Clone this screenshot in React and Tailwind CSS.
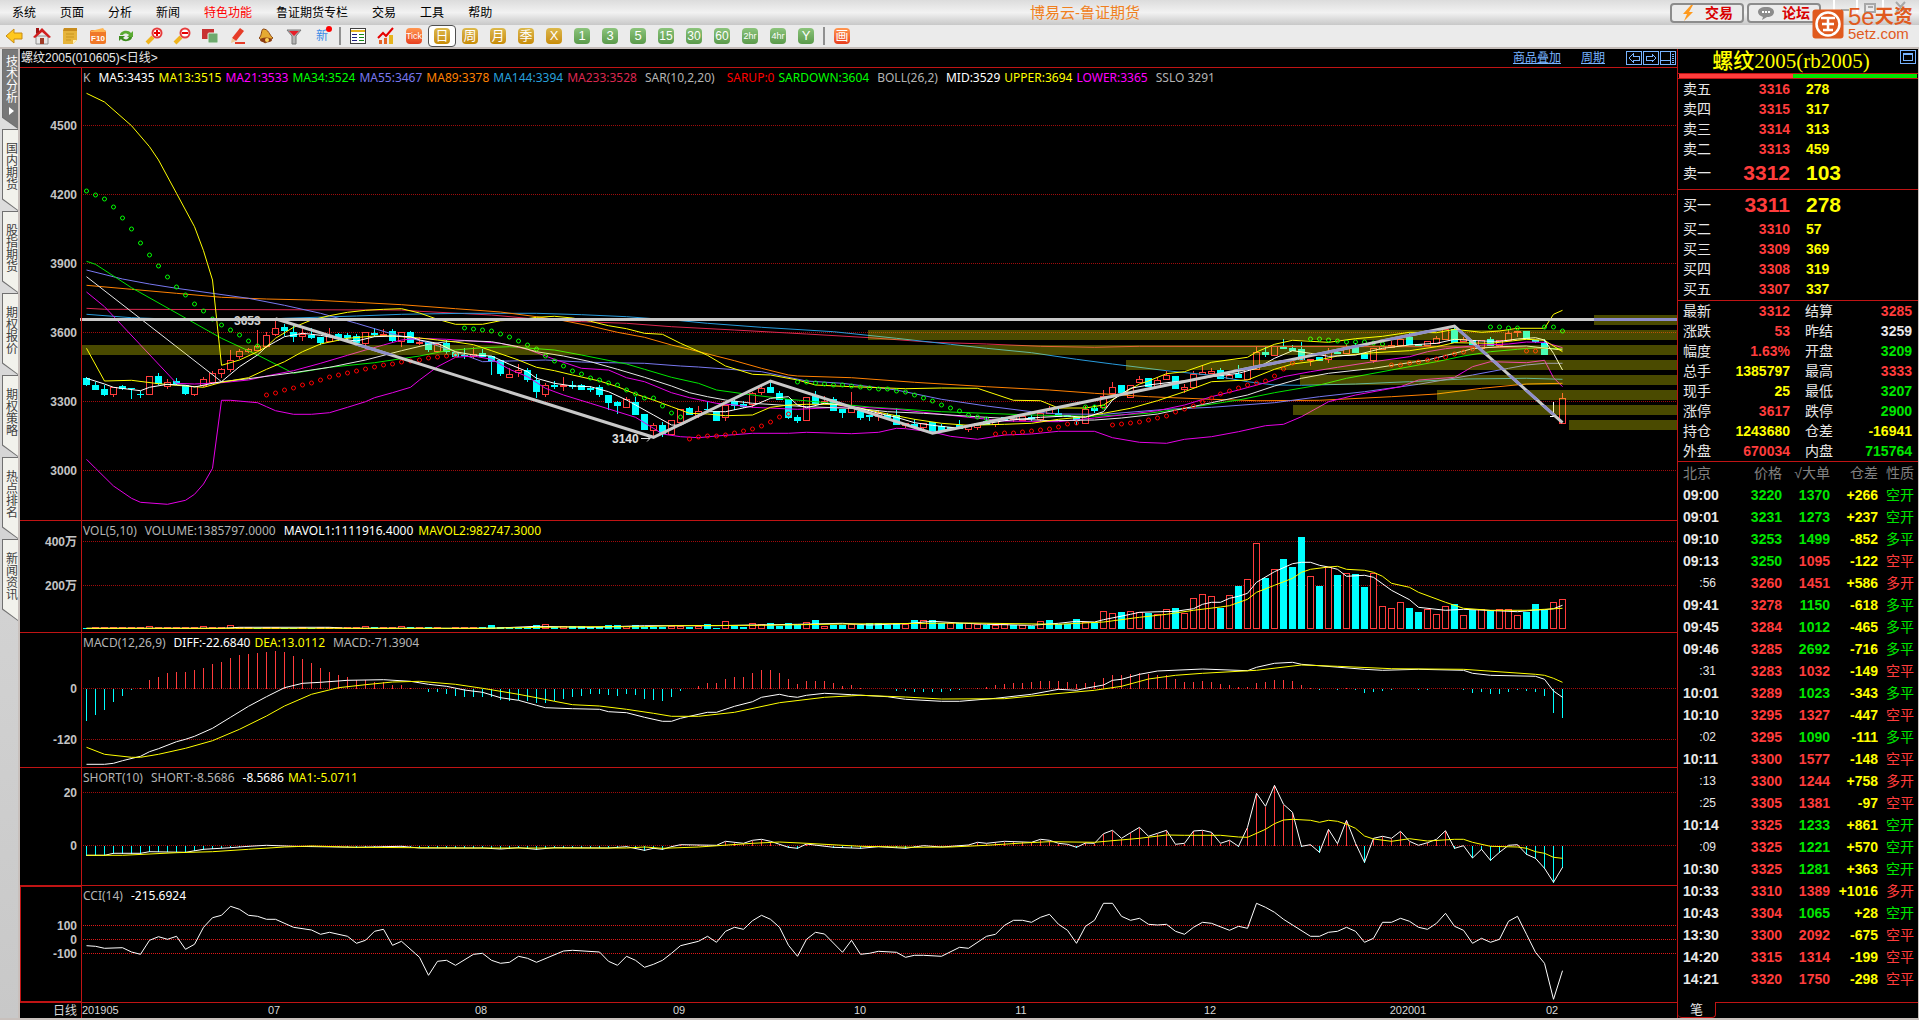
import clsx from "clsx";

const MENU = ["系统", "页面", "分析", "新闻", "特色功能", "鲁证期货专栏", "交易", "工具", "帮助"];

const SIDE_TABS = ["技术分析", "国内期货", "股指期货", "期权报价", "期权策略", "热点排名", "新闻资讯"];

const PERIODS = [
  { label: "日", color: "gold", active: true },
  { label: "周", color: "gold" },
  { label: "月", color: "gold" },
  { label: "季", color: "gold" },
  { label: "X", color: "gold" },
  { label: "1", color: "green" },
  { label: "3", color: "green" },
  { label: "5", color: "green" },
  { label: "15", color: "green" },
  { label: "30", color: "green" },
  { label: "60", color: "green" },
  { label: "2hr", color: "green" },
  { label: "4hr", color: "green" },
  { label: "Y", color: "green" },
];

const ASKS = [
  ["卖五", 3316, 278],
  ["卖四", 3315, 317],
  ["卖三", 3314, 313],
  ["卖二", 3313, 459],
];

const BIDS = [
  ["买二", 3310, 57],
  ["买三", 3309, 369],
  ["买四", 3308, 319],
  ["买五", 3307, 337],
];

const RED = "text-[#ff3c3c]";
const GREEN = "text-[#00e600]";
const YELLOW = "text-[#ffff00]";
const WHITE = "text-[#e8e8e8]";

const STATS = [
  ["最新", "3312", RED, "结算", "3285", RED],
  ["涨跌", "53", RED, "昨结", "3259", WHITE],
  ["幅度", "1.63%", RED, "开盘", "3209", GREEN],
  ["总手", "1385797", YELLOW, "最高", "3333", RED],
  ["现手", "25", YELLOW, "最低", "3207", GREEN],
  ["涨停", "3617", RED, "跌停", "2900", GREEN],
  ["持仓", "1243680", YELLOW, "仓差", "-16941", YELLOW],
  ["外盘", "670034", RED, "内盘", "715764", GREEN],
];

// time, price, price side, size, position change, kind, trade side
const TICKS = [
  ["09:00", 3220, GREEN, 1370, "+266", "空开", GREEN],
  ["09:01", 3231, GREEN, 1273, "+237", "空开", GREEN],
  ["09:10", 3253, GREEN, 1499, "-852", "多平", GREEN],
  ["09:13", 3250, GREEN, 1095, "-122", "空平", RED],
  [":56", 3260, RED, 1451, "+586", "多开", RED],
  ["09:41", 3278, RED, 1150, "-618", "多平", GREEN],
  ["09:45", 3284, RED, 1012, "-465", "多平", GREEN],
  ["09:46", 3285, RED, 2692, "-716", "多平", GREEN],
  [":31", 3283, RED, 1032, "-149", "空平", RED],
  ["10:01", 3289, RED, 1023, "-343", "多平", GREEN],
  ["10:10", 3295, RED, 1327, "-447", "空平", RED],
  [":02", 3295, RED, 1090, "-111", "多平", GREEN],
  ["10:11", 3300, RED, 1577, "-148", "空平", RED],
  [":13", 3300, RED, 1244, "+758", "多开", RED],
  [":25", 3305, RED, 1381, "-97", "空平", RED],
  ["10:14", 3325, RED, 1233, "+861", "空开", GREEN],
  [":09", 3325, RED, 1221, "+570", "空开", GREEN],
  ["10:30", 3325, RED, 1281, "+363", "空开", GREEN],
  ["10:33", 3310, RED, 1389, "+1016", "多开", RED],
  ["10:43", 3304, RED, 1065, "+28", "空开", GREEN],
  ["13:30", 3300, RED, 2092, "-675", "空平", RED],
  ["14:20", 3315, RED, 1314, "-199", "空平", RED],
  ["14:21", 3320, RED, 1750, "-298", "空平", RED],
];

/* ---------- chart data: "bar,level" pairs, three levels to a pixel ---------- */

const MAIN_LINES = [
  ["#dc2850", "0,685 2,688 35,690 37,694 45,705 49,715 55,725 60,730 65,740 72,750 80,762 87,773 94,787 100,792 106,799 112,802 117,799 150,800 155,802 164,806"],
  ["#289bdc", "0,703 5,713 10,718 20,718 22,715 30,708 35,703 42,700 50,700 55,704 60,710 63,716 66,722 69,730 75,742 83,755 90,775 96,793 100,805 105,818 110,838 114,852 120,872 125,886 129,905 132,915 135,916 141,912 147,905 153,897 160,895 164,898"],
  ["#ff8000", "0,616 5,628 10,640 15,652 20,657 25,660 30,667 35,674 41,686 46,696 50,710 53,722 56,738 59,757 62,772 65,795 67,808 72,842 75,865 78,885 79,888 85,893 92,907 100,920 107,930 112,940 118,950 125,958 130,962 137,961 145,950 150,942 155,925 160,912 164,910"],
  ["#7878f0", "0,570 4,597 7,612 10,625 18,655 22,676 26,700 30,730 34,762 38,788 42,825 44,845 47,843 51,840 55,846 58,848 62,850 66,858 68,861 75,875 80,903 84,910 90,930 95,958 100,978 105,995 108,1002 113,1003 120,988 125,982 132,968 137,950 142,935 148,913 154,885 158,865 160,855 162,850 164,850"],
  ["#00e600", "0,544 1,553 5,623 15,775 19,825 23,880 27,862 32,848 37,828 40,812 44,803 47,800 52,810 55,825 60,852 62,868 65,892 68,910 70,930 74,945 78,958 81,965 87,981 95,995 105,1005 112,1009 118,1000 122,985 128,960 132,938 137,915 140,895 145,870 150,845 153,828 156,815 159,808 161,803 164,807"],
  ["#e600e6", "0,636 2,680 10,910 12,912 15,908 18,900 20,888 23,872 26,850 29,826 31,810 33,795 35,780 37,775 40,778 43,783 46,790 49,808 52,838 55,865 58,870 60,893 62,905 65,938 67,953 70,970 72,975 74,982 79,988 85,980 90,988 95,1003 98,1012 102,1023 108,1025 112,1014 115,1005 119,992 122,975 125,950 128,930 131,908 133,890 136,875 139,862 143,845 147,830 149,815 151,806 155,795 158,792 160,786 162,787 164,803"],
  ["#e6e6e6", "0,590 15,905 18,896 23,878 27,862 31,840 35,812 38,793 40,785 42,782 45,785 48,800 50,815 53,828 56,845 59,868 62,892 65,918 67,938 69,950 71,960 74,970 80,980 86,986 89,995 93,1000 100,1012 107,1022 112,1020 115,1014 119,1002 125,968 129,945 132,918 135,895 138,880 143,865 146,852 149,840 152,820 154,806 157,800 160,798 164,810"],
  ["#ffff00", "0,805 2,903 5,901 8,911 10,916 13,922 15,907 18,893 20,868 22,845 24,815 26,792 29,775 32,768 34,768 37,774 39,780 41,786 43,794 45,812 48,840 50,862 52,872 54,885 57,903 59,920 61,942 63,960 65,980 67,1000 69,1002 71,1007 74,1005 76,982 78,975 80,973 83,973 86,985 89,1002 92,1018 95,1030 98,1036 102,1033 105,1030 108,1018 111,1010 113,1000 116,985 119,962 122,935 125,905 129,900 132,868 134,852 136,845 139,828 143,818 147,812 150,800 152,788 156,790 160,778 162,781 164,815"],
  ["#ffff00", "0,40 2,66 5,137 7,200 8,240 10,340 12,440 13,512 14,600 15,856 17,840 19,815 20,800 21,775 23,742 25,720 27,707 29,697 31,691 33,688 35,686 37,699 39,718 41,733 44,733 46,722 48,720 50,712 52,709 54,714 56,724 58,737 60,746 62,760 64,763 66,790 69,826 71,858 74,883 76,885 79,900 81,915 84,919 91,926 95,924 99,925 103,961 106,962 108,984 111,984 113,975 115,942 117,912 118,903 120,881 122,875 125,847 129,832 130,816 132,793 134,781 138,787 141,776 144,769 147,757 150,758 152,748 155,757 157,753 159,745 162,745 163,703 164,691"],
  ["#e600e6", "0,1138 1,1165 3,1218 5,1255 6,1267 9,1273 11,1261 12,1243 13,1212 14,1165 15,961 16,961 19,968 20,980 21,992 23,1003 25,1003 27,998 29,982 31,965 32,953 34,938 36,922 37,900 39,860 41,832 43,828 45,838 47,868 49,890 51,925 53,945 56,970 59,995 61,1012 63,1045 64,1062 66,1070 68,1073 70,1068 74,1060 78,1060 80,1057 85,1061 88,1057 90,1045 91,1046 94,1056 96,1069 99,1078 102,1065 105,1062 108,1054 112,1054 114,1073 117,1087 120,1090 122,1078 125,1070 128,1055 131,1037 133,1033 135,1010 138,965 141,945 144,930 146,920 148,900 152,892 154,860 156,845 160,848 162,841 163,893 164,920"],
  ["#ffffff", "0,895 2,912 3,922 6,932 7,922 9,913 11,916 12,921 14,910 15,905 17,860 19,825 20,800 21,785 22,770 24,760 26,766 28,776 30,783 32,770 34,768 36,770 37,780 39,790 41,815 43,825 45,828 47,853 49,875 50,895 52,910 54,918 56,920 58,935 60,960 61,975 63,1005 65,1035 66,1036 67,1022 69,995 71,995 74,978 76,955 78,950 79,975 80,983 82,970 84,975 86,985 88,1000 90,1012 92,1028 94,1036 97,1045 99,1035 102,1022 106,1012 109,1008 111,1012 113,995 114,960 116,925 118,915 121,905 123,900 125,890 128,880 130,865 132,835 134,812 136,820 138,829 141,825 144,805 147,795 150,790 152,778 155,783 157,784 159,777 161,773 162,780 163,820 164,870"],
];

// open/close top, bottom, then high, low. "d" closes down, "u" closes up.
const CANDLES = `d894,914,892,918 d915,929,905,930 d927,944,915,948 u922,943,920,950 d919,926,914,930 d924,927,924,957
d942,944,932,954 u889,943,889,943 d888,912,880,914 u907,919,898,926 d903,912,894,914 d914,941,914,945
u919,943,919,948 u898,915,890,922 u880,905,872,905 u868,880,864,894 u839,868,810,875 u814,829,806,837
u807,812,804,820 u799,811,750,812 u764,797,756,804 u745,763,722,768 d741,754,732,768 d756,770,736,786
u762,767,745,782 d766,773,744,778 d771,788,771,794 u768,784,744,784 d762,776,760,782 d766,774,760,780
d769,788,763,796 u757,790,757,808 d760,766,744,770 u762,766,747,766 d754,782,748,788 u757,784,757,800
d757,788,752,788 u785,790,772,795 d786,809,786,815 u792,812,792,812 d789,815,780,822 d817,830,817,830
d825,828,804,837 u822,828,802,836 d820,831,808,831 d828,842,828,885 d840,882,840,888 u883,890,864,890
u871,877,852,890 d871,899,864,906 d900,935,882,954 u916,943,910,950 d915,920,904,926 u915,918,891,934
d916,920,903,926 d916,929,912,929 d924,929,918,936 d921,944,915,950 d946,968,946,990 d966,977,962,1002
u958,980,950,980 d966,1004,950,1004 d1003,1049,1003,1049 u1036,1050,1030,1075 d1036,1062,1026,1070 u1021,1063,1021,1063
u986,1025,986,1025 d984,1004,980,1004 u993,1005,978,1015 d986,990,966,1000 d994,1022,994,1022 u976,1012,976,1022
d964,978,958,990 d973,980,962,985 u940,972,936,985 u925,935,915,945 d921,938,900,938 d938,960,932,960
d958,1014,958,1018 d1010,1023,1005,1030 u952,1021,952,1021 d946,972,934,972 u962,970,948,970 d958,992,950,992
d986,998,986,1014 u980,996,936,996 d992,1013,992,1020 d1004,1010,1004,1022 u1000,1008,990,1022 d1006,1014,1000,1014
d1006,1034,984,1034 u1030,1036,1030,1045 d1032,1040,1018,1040 u1030,1040,1030,1050 d1026,1060,1026,1060 d1038,1054,1032,1054
d1042,1050,1042,1050 d1036,1048,1020,1048 u1038,1046,1038,1056 u1030,1042,1030,1050 d1022,1034,1012,1034 u1018,1032,1018,1040
d1010,1022,1010,1022 u1008,1018,1008,1026 u1008,1020,1008,1020 d1010,1018,1005,1024 u998,1016,990,1026 u988,998,978,998
d1000,1010,988,1010 d1006,1010,1006,1010 d1012,1024,1012,1036 u986,1028,978,1028 d984,992,975,998 u948,980,930,980
u922,940,906,940 d915,940,915,940 u916,950,916,950 u897,907,888,907 d893,920,893,920 u900,918,890,918
u886,897,872,897 d888,926,888,926 u922,928,912,940 u882,922,874,922 u875,882,855,882 u873,880,864,880
d870,896,864,896 u886,894,872,894 d882,895,855,895 u868,896,868,896 u816,866,800,866 d815,824,800,832
u798,824,798,824 d800,808,778,808 d804,812,794,812 d806,840,786,840 u836,840,836,857 d831,843,831,843
u815,836,804,850 d815,822,808,822 u800,820,792,820 d798,820,790,820 d818,837,818,837 u805,840,805,848
u797,807,797,807 u795,800,783,800 u778,795,778,795 d770,794,760,794 d792,797,792,797 u784,795,784,795
u774,790,768,790 u748,776,748,776 d746,788,740,788 u777,784,770,784 d780,796,780,796 u780,804,780,804
d778,797,772,797 u780,796,780,796 u760,780,748,780 u753,757,753,770 d753,776,753,776 d779,786,779,790
d788,826,778,826 w1008,1010,966,1010 u955,1028,940,1028`
  .split(/\s+/)
  .map((s) => ({ kind: s[0], v: s.slice(1).split(",").map(Number) }));

// stop-and-reverse runs: first bar, colour, levels
const SAR = [
  [0, "#00ff00", [334, 346, 358, 382, 415, 448, 490, 526, 559, 592, 622, 646, 673, 694, 717, 736, 751, 766, 782, 797]],
  [20, "#ff0000", [946, 940, 931, 925, 916, 908, 901, 892, 886, 880, 874, 868, 862, 856, 853, 847, 844, 841, 835, 832, 829, 826]],
  [42, "#00ff00", [745, 748, 751, 754, 763, 772, 784, 796, 808, 829, 844, 859, 874, 883, 895, 901, 910, 916, 931, 943, 953, 953, 977, 998, 1012]],
  [67, "#ff0000", [1076, 1072, 1069, 1069, 1066, 1060, 1054, 1048, 1039, 1027, 1012, 1001]],
  [79, "#00ff00", [907, 907, 910, 913, 916, 916, 919, 922, 924, 926, 928, 932, 937, 946, 955, 964, 976, 985, 993, 1004, 1012, 1018]],
  [101, "#ff0000", [1063, 1060, 1060, 1057, 1054, 1051, 1046, 1040, 1033, 1030]],
  [111, "#00ff00", [980, 982, 982]],
  [114, "#ff0000", [1036, 1033, 1030, 1027, 1021, 1015, 1009, 997, 988, 979, 967, 955, 943, 934, 925, 916, 908, 904, 887, 868, 850, 836]],
  [136, "#00ff00", [778, 778, 781, 784, 787, 787, 787, 788, 791]],
  [145, "#ff0000", [856, 856, 850, 847, 841, 836, 832, 823, 817, 808]],
  [156, "#00ff00", [742, 742, 745, 745]],
  [160, "#ff0000", [814, 812]],
  [162, "#00ff00", [742, 742, 754]],
];

const BANDS = [
  [0, 795],
  [1512, 705],
  [786, 750],
  [1044, 840],
  [1218, 885],
  [1355, 930],
  [1211, 975],
  [1487, 1020],
];

const ZIGZAG = "21,716 63,1072 76,903 94,1060 152,738 164,1028";

// bar heights, negative for a falling day
const VOLUMES = [
  -3, 1, 1, 1, 1, 1, 1, 5, 1, 1, 1, 1, 1, 5, 1, 1, 8, 1, 1, -2, 4, 4, -4, -4, 4, -2, 1, 1, 1, 1, 1, 5,
  -5, 1, 1, 5, -5, 1, -5, 1, -3, 1, 1, 1, -5, -11, -5, -5, -6, -6, -11, 11, -7, 7, -8, -8, -6, -6, -11,
  -11, 7, -11, -7, -7, -7, 6, 6, -7, 6, -14, -4, 20, -8, -7, 14, 11, -17, -9, -17, -11, 19, -26, 7, -13,
  -13, 12, -11, -17, -17, -13, -17, 13, -26, 23, -26, -17, 16, -19, 16, 13, -11, 10, 11, -11, 10, -8, 20,
  -26, -14, -14, -29, 19, -19, 52, 46, -50, 52, 49, -48, 43, 58, -62, 46, 91, 103, 97, -62, 100, -128, 148,
  256, -152, 178, -209, -185, -275, 157, -128, 183, -161, 166, -164, -125, 164, 67, 61, 79, -62, -50, 58,
  43, 67, -74, 40, -56, 56, -54, 58, 58, 40, -52, -74, -56, 79, 88,
];

const MAVOL1 =
  "0,340 15,340 17,337 27,337 29,340 45,340 50,334 56,337 62,332 70,332 76,329 79,328 84,325 87,330 91,326 94,319 97,324 100,328 105,331 108,325 110,319 112,321 113,314 116,298 117,292 121,289 123,281 124,268 125,262 126,262 127,250 128,244 129,235 130,202 132,170 134,146 135,142 136,142 137,151 138,156 139,163 140,184 142,181 143,187 145,226 147,254 148,277 151,286 153,283 159,290 161,285 162,284 163,281 164,271";
const MAVOL2 =
  "0,340 44,340 55,335 62,335 65,332 75,331 84,327 98,324 108,328 113,321 117,307 120,298 123,286 126,276 127,272 129,253 130,232 132,211 134,190 135,172 136,163 138,156 139,154 140,163 142,166 143,172 144,184 145,205 147,217 148,232 151,262 153,280 156,286 160,286 164,280";

const MACD = [
  -97, -80, -64, -40, -23, -4, 2, 25, 36, 46, 51, 49, 55, 61, 73, 79, 91, 100, 103, 106, 109, 112, 109, 97,
  88, 76, 61, 51, 42, 36, 25, 25, 19, 19, 10, 10, 2, -2, -10, -10, -16, -22, -25, -25, -25, -25, -34, -37,
  -34, -37, -43, -43, -38, -31, -25, -22, -17, -17, -19, -22, -17, -19, -31, -34, -37, -26, -8, -2, 7, 16,
  16, 28, 34, 34, 46, 55, 55, 46, 28, 13, 22, 22, 22, 16, 7, 10, 1, -1, -1, -1, -8, -8, -10, -10, -10, -10,
  -8, -4, -1, 1, 4, 10, 13, 16, 16, 19, 22, 22, 22, 19, 13, 16, 19, 31, 40, 40, 43, 46, 43, 40, 40, 28, 19,
  19, 22, 19, 13, 10, 4, 4, 16, 19, 25, 25, 22, 10, 1, -4, -1, -4, 1, -4, -13, -10, -7, -4, -1, -1, -4, -4,
  -1, 1, -1, -4, -13, -10, -16, -16, -10, -4, -7, -10, -22, -74, -88,
];
const DIFF =
  "0,748 2,748 3,745 4,737 6,724 7,710 8,701 10,680 11,673 12,664 14,640 16,607 18,574 20,545 22,518 24,505 26,502 29,496 33,494 36,499 38,508 40,514 42,525 44,532 46,548 48,556 50,571 51,578 54,581 57,583 58,590 60,593 62,607 64,619 65,619 66,610 69,592 70,592 72,574 74,560 75,547 77,538 78,544 79,547 80,541 82,535 85,539 89,545 91,553 95,559 97,559 101,550 105,538 108,523 110,526 111,520 113,510 114,496 115,493 117,478 119,468 124,462 129,467 130,457 132,445 134,442 135,448 142,463 144,466 148,463 153,466 154,475 156,481 161,484 162,493 163,528 164,547";
const DEA =
  "0,697 2,718 5,727 6,727 8,718 11,700 14,677 17,643 20,603 22,573 25,538 28,518 31,509 34,501 37,499 41,508 44,520 48,538 50,548 52,559 54,569 57,573 60,583 63,595 65,604 68,604 72,592 77,563 82,547 86,541 91,546 95,552 102,551 107,538 112,526 115,514 118,492 121,481 124,475 130,466 135,450 139,454 145,461 153,463 161,478 162,481 163,490 164,502";

const SHORT =
  "0,1021 2,1021 3,1015 6,1015 7,1010 11,1012 13,1003 16,998 18,994 20,991 23,994 30,997 35,994 37,999 44,999 46,1002 48,998 50,1003 52,998 58,999 60,995 62,1006 63,1000 64,1003 65,995 66,989 70,991 71,979 73,985 74,976 75,973 76,979 78,997 79,1000 80,987 83,997 86,1000 88,995 91,1000 93,992 95,996 98,990 99,982 100,985 102,979 105,982 106,973 107,976 108,985 109,988 110,997 111,984 112,985 113,956 114,946 115,970 116,953 117,937 118,964 119,955 120,946 121,988 122,985 123,948 124,946 125,952 126,985 127,976 128,994 129,937 130,835 131,874 132,811 133,868 134,892 135,994 136,989 137,1012 138,943 139,986 140,916 141,985 142,1042 143,970 144,964 145,970 146,949 147,979 148,991 149,983 150,973 151,947 152,1000 153,992 154,1029 155,1003 156,1036 157,1012 158,991 159,989 160,1018 161,1030 162,1060 163,1102 164,1057";
const SHORT_MA =
  "0,1021 4,1021 10,1013 14,1010 18,1003 22,996 25,993 30,997 42,999 60,999 62,996 64,1000 68,996 74,985 77,981 80,985 86,994 92,997 96,996 100,991 104,984 107,980 112,982 117,970 120,960 122,961 126,961 128,966 129,967 131,943 132,926 133,915 134,913 136,916 137,922 138,916 139,919 140,928 141,940 142,963 143,972 145,979 147,971 149,978 152,973 153,973 154,982 156,994 159,996 160,1000 161,1010 162,1015 163,1027 164,1030";

const CCI =
  "0,1292 1,1294 2,1300 4,1298 5,1311 6,1318 7,1276 8,1265 9,1273 10,1264 11,1303 12,1288 13,1237 14,1208 15,1201 16,1174 17,1183 18,1201 19,1204 20,1213 21,1213 23,1237 25,1245 26,1258 27,1252 29,1264 30,1285 31,1276 32,1249 33,1243 34,1291 35,1279 37,1327 38,1381 39,1339 40,1336 41,1351 43,1318 44,1315 45,1336 46,1345 47,1342 48,1324 49,1330 50,1342 53,1308 54,1306 57,1311 58,1339 59,1351 60,1324 61,1336 62,1357 63,1348 64,1336 65,1315 66,1292 68,1279 69,1264 70,1282 71,1249 72,1237 73,1243 74,1217 75,1201 76,1213 77,1237 78,1291 79,1324 80,1273 81,1252 82,1257 84,1312 85,1276 86,1318 87,1315 88,1309 90,1312 91,1327 92,1321 93,1321 95,1324 97,1297 98,1300 100,1264 101,1258 102,1231 103,1216 104,1216 105,1222 106,1207 107,1198 108,1228 109,1246 110,1285 111,1234 112,1216 113,1165 114,1165 115,1204 116,1216 117,1210 118,1228 119,1230 120,1228 121,1249 122,1258 123,1237 124,1222 125,1225 127,1246 128,1234 129,1240 130,1165 131,1177 132,1192 133,1213 136,1264 137,1264 138,1252 139,1249 140,1237 141,1249 142,1282 143,1270 144,1222 145,1222 146,1210 147,1219 148,1237 149,1243 150,1225 151,1195 152,1234 153,1246 154,1285 155,1270 156,1282 157,1273 158,1219 159,1204 160,1258 161,1312 162,1345 163,1453 164,1367";

/* ---------- chart helpers ---------- */

const UP = "#ff3c3c";
const DOWN = "#00ffff";
const AXIS_X = 61;

const barX = (i) => AXIS_X + 5.5 + i * 9;

const parse = (str) => str.split(" ").map((p) => p.split(",").map(Number));

const toPoints = (str, shift) =>
  parse(str)
    .map(([i, v]) => `${barX(i)},${(v / 3 + shift).toFixed(1)}`)
    .join(" ");

// level of a sparse line at a given bar
const levelAt = (pts, i) => {
  const k = pts.findIndex(([x]) => x >= i);
  if (pts[k][0] === i) return pts[k][1];
  const [x0, y0] = pts[k - 1];
  const [x1, y1] = pts[k];
  return y0 + ((y1 - y0) * (i - x0)) / (x1 - x0);
};

function Line({ data, shift, color, width = 1 }) {
  return <polyline points={toPoints(data, shift)} fill="none" stroke={color} strokeWidth={width} />;
}

function Stems({ values, zero }) {
  return values.map((v, i) => (
    <line
      key={i}
      x1={barX(i)}
      x2={barX(i)}
      y1={zero}
      y2={zero - v / 3}
      stroke={v >= 0 ? UP : DOWN}
      shapeRendering="crispEdges"
    />
  ));
}

function Panel({ height, legend, ticks, bright, selected, children }) {
  return (
    <section className={clsx("relative border-b border-[#c01414]", height)}>
      <svg className="block h-full w-full" aria-hidden="true">
        {ticks.map(([label, y]) => (
          <g key={label}>
            <line
              x1={AXIS_X + 2}
              x2="100%"
              y1={y + 0.5}
              y2={y + 0.5}
              stroke={bright ? "#e01818" : "#a00c0c"}
              strokeDasharray="1 1"
              shapeRendering="crispEdges"
            />
            <text
              x={AXIS_X - 4}
              y={y + 5}
              textAnchor="end"
              fill="#c4c4c4"
              className="text-[12px] font-bold"
            >
              {label}
            </text>
          </g>
        ))}
        {children}
        <line x1={AXIS_X + 0.5} x2={AXIS_X + 0.5} y1="0" y2="100%" stroke="#c01414" shapeRendering="crispEdges" />
        {selected && (
          <rect x="0.5" y="0.5" width={AXIS_X} height="115" fill="none" stroke="#c01414" shapeRendering="crispEdges" />
        )}
      </svg>
      <div className="absolute top-0 left-[63px] flex gap-1 text-[12px] leading-5 whitespace-nowrap font-['Noto_Sans',sans-serif]">
        {legend.map(([text, tone]) => (
          <span key={text} className={tone}>
            {text}
          </span>
        ))}
      </div>
    </section>
  );
}

function PricePanel() {
  const shift = 12;
  return (
    <Panel
      height="h-[453px]"
      legend={[
        ["K", "text-[#b4b4b4] mr-1"],
        ["MA5:3435", "text-white"],
        ["MA13:3515", "text-[#ffff00]"],
        ["MA21:3533", "text-[#ff00ff]"],
        ["MA34:3524", "text-[#00ff00]"],
        ["MA55:3467", "text-[#7878f0]"],
        ["MA89:3378", "text-[#ff8000]"],
        ["MA144:3394", "text-[#28a0dc]"],
        ["MA233:3528", "text-[#dc2850]"],
        ["SAR(10,2,20)", "text-[#b4b4b4] ml-1 mr-2"],
        ["SARUP:0", "text-[#ff0000]"],
        ["SARDOWN:3604", "text-[#00ff00]"],
        ["BOLL(26,2)", "text-[#b4b4b4] ml-1 mr-1"],
        ["MID:3529", "text-white"],
        ["UPPER:3694", "text-[#ffff00]"],
        ["LOWER:3365", "text-[#ff00ff]"],
        ["SSLO 3291", "text-[#b4b4b4] ml-1"],
      ]}
      ticks={[
        ["4500", 57],
        ["4200", 126],
        ["3900", 195],
        ["3600", 264],
        ["3300", 333],
        ["3000", 402],
      ]}
    >
      <defs>
        <clipPath id="bands">
          {BANDS.map(([x, v]) => (
            <rect key={v} x={AXIS_X + 1 + x} y={v / 3 + shift} width="3000" height="10" />
          ))}
        </clipPath>
      </defs>
      {CANDLES.map(({ kind, v: [top, bottom, high, low] }, i) => {
        const x = barX(i);
        const y = (n) => Math.round(n / 3 + shift);
        const body = Math.max(1, y(bottom) - y(top));
        const color = kind === "u" ? UP : kind === "d" ? DOWN : "#ffffff";
        return (
          <g key={i} stroke={color} shapeRendering="crispEdges">
            <line x1={x} x2={x} y1={y(high)} y2={y(top)} />
            <line x1={x} x2={x} y1={y(bottom)} y2={y(low)} />
            {kind === "u" ? (
              <rect x={x - 3} y={y(top) + 0.5} width="6" height={body} fill="#000" />
            ) : (
              <rect x={x - 3.5} y={y(top)} width="7" height={body} fill={color} stroke="none" />
            )}
            {kind === "w" && <line x1={x} x2={x} y1={y(high)} y2={y(low)} />}
          </g>
        );
      })}
      {MAIN_LINES.map(([color, data], k) => (
        <Line key={k} data={data} shift={shift} color={color} />
      ))}
      {SAR.map(([start, color, levels]) =>
        levels.map((v, k) => (
          <ellipse
            key={start + k}
            cx={barX(start + k)}
            cy={Math.round(v / 3 + shift)}
            rx="2"
            ry="2"
            fill="none"
            stroke={color}
          />
        )),
      )}
      {BANDS.map(([x, v]) => (
        <rect
          key={v}
          x={AXIS_X + 1 + x}
          y={v / 3 + shift}
          width="100%"
          height="10"
          fill="#ffff00"
          fillOpacity="0.29"
          shapeRendering="crispEdges"
        />
      ))}
      <text x="214" y="257" fill="#d0d0d0" className="text-[12px] font-bold">
        3653
      </text>
      <line x1={AXIS_X - 1} x2="100%" y1="251.5" y2="251.5" stroke="#c8c8c8" strokeWidth="3" />
      <Line data={ZIGZAG} shift={shift} color="#c8c8c8" width={3} />
      <g clipPath="url(#bands)">
        <line x1={AXIS_X} x2="100%" y1="251.5" y2="251.5" stroke="#8c8cc8" strokeWidth="3" />
        <Line data={ZIGZAG} shift={shift} color="#9090c8" width={3} />
      </g>
      <text x="592" y="375" fill="#e0e0e0" className="text-[12px] font-bold">
        3140
      </text>
      <path d="M621 370.5h9m-3-3 3 3-3 3" fill="none" stroke="#e0e0e0" />
    </Panel>
  );
}

function VolumePanel() {
  const base = 108;
  return (
    <Panel
      height="h-[112px]"
      legend={[
        ["VOL(5,10)", "text-[#b4b4b4] mr-1"],
        ["VOLUME:1385797.0000", "text-[#b4b4b4] mr-1"],
        ["MAVOL1:1111916.4000", "text-white mr-px"],
        ["MAVOL2:982747.3000", "text-[#ffff00]"],
      ]}
      ticks={[
        ["400万", 20],
        ["200万", 64],
      ]}
    >
      {VOLUMES.map((v, i) => {
        const h = Math.max(1, Math.round(Math.abs(v) / 3));
        return v > 0 ? (
          <rect
            key={i}
            x={barX(i) - 3}
            y={base - h - 0.5}
            width="6"
            height={h}
            fill="#000"
            stroke={UP}
            shapeRendering="crispEdges"
          />
        ) : (
          <rect key={i} x={barX(i) - 3.5} y={base - h} width="7" height={h} fill={DOWN} shapeRendering="crispEdges" />
        );
      })}
      <Line data={MAVOL1} shift={-6} color="#ffffff" />
      <Line data={MAVOL2} shift={-6} color="#ffff00" />
    </Panel>
  );
}

function MacdPanel() {
  return (
    <Panel
      height="h-[135px]"
      legend={[
        ["MACD(12,26,9)", "text-[#b4b4b4] mr-1"],
        ["DIFF:-22.6840", "text-white"],
        ["DEA:13.0112", "text-[#ffff00] mr-1"],
        ["MACD:-71.3904", "text-[#b4b4b4]"],
      ]}
      ticks={[
        ["0", 55],
        ["-120", 106],
      ]}
    >
      <Stems values={MACD} zero={55.5} />
      <Line data={DIFF} shift={-118} color="#ffffff" />
      <Line data={DEA} shift={-118} color="#ffff00" />
    </Panel>
  );
}

function ShortPanel() {
  const pts = parse(SHORT);
  const values = VOLUMES.map((_, i) => 991 - levelAt(pts, i));
  return (
    <Panel
      height="h-[118px]"
      legend={[
        ["SHORT(10)", "text-[#b4b4b4] mr-1"],
        ["SHORT:-8.5686", "text-[#b4b4b4] mr-1"],
        ["-8.5686", "text-white"],
        ["MA1:-5.0711", "text-[#ffff00]"],
      ]}
      ticks={[
        ["20", 24],
        ["0", 77],
      ]}
    >
      <Stems values={values} zero={77.5} />
      <Line data={SHORT} shift={-253} color="#ffffff" />
      <Line data={SHORT_MA} shift={-253} color="#ffff00" />
    </Panel>
  );
}

function CciPanel() {
  return (
    <Panel
      height="h-[117px]"
      bright
      selected
      legend={[
        ["CCI(14)", "text-[#b4b4b4] mr-1"],
        ["-215.6924", "text-white"],
      ]}
      ticks={[
        ["100", 39],
        ["0", 53],
        ["-100", 67],
      ]}
    >
      <Line data={CCI} shift={-371} color="#ffffff" />
    </Panel>
  );
}

function TimeAxis() {
  const months = [
    ["201905", 62, "start"],
    ["07", 254, "middle"],
    ["08", 461, "middle"],
    ["09", 659, "middle"],
    ["10", 840, "middle"],
    ["11", 1001, "middle"],
    ["12", 1190, "middle"],
    ["202001", 1388, "middle"],
    ["02", 1532, "middle"],
  ];
  return (
    <svg className="block h-[15px] w-full" aria-hidden="true">
      <text x="57" y="12" textAnchor="end" fill="#d8d8d8" className="text-[12px]">
        日线
      </text>
      <line x1={AXIS_X + 0.5} x2={AXIS_X + 0.5} y1="0" y2="15" stroke="#c01414" />
      {months.map(([label, x, anchor]) => (
        <text key={label} x={x} y="11" textAnchor={anchor} fill="#d8d8d8" className="text-[11px]">
          {label}
        </text>
      ))}
    </svg>
  );
}

/* ---------- window chrome ---------- */

function MenuBar() {
  return (
    <header className="flex h-[25px] items-center bg-linear-to-b from-[#dcdcdc] via-[#f2f2f2] to-[#c8c8c8]">
      <nav className="flex">
        {MENU.map((item) => (
          <button
            key={item}
            type="button"
            className={clsx("px-3 text-[12px] leading-6", item === "特色功能" ? "text-[#ff0000]" : "text-black")}
          >
            {item}
          </button>
        ))}
      </nav>
      <h1 className="flex-1 pr-1 text-center text-[15px] leading-6 text-[#f08020]">博易云-鲁证期货</h1>
      <div className="mr-[98px] flex gap-[3px]">
        <HeaderButton label="交易">
          <path d="M10 0 2 9h4l-3 7 9-9H8l4-7z" fill="#ff9a1e" />
        </HeaderButton>
        <HeaderButton label="论坛">
          <path d="M8 2c5 0 8 2 8 5s-3 5-7 5l-5 3 1-3C2 11 0 9 0 7c0-3 3-5 8-5z" fill="#8c8c8c" />
          <path d="M4 6h2v2H4zM7 6h2v2H7zM10 6h2v2h-2z" fill="#fff" />
        </HeaderButton>
      </div>
    </header>
  );
}

function HeaderButton({ label, children }) {
  return (
    <button
      type="button"
      className="flex h-5 w-[74px] items-center justify-center gap-2 rounded-sm border-2 border-[#8c8c8c] bg-[#ececec] text-[14px] leading-4 font-bold text-[#d80000]"
    >
      <svg width="16" height="16" viewBox="0 0 16 16" aria-hidden="true">
        {children}
      </svg>
      {label}
    </button>
  );
}

function WindowControls() {
  return (
    <div className="absolute top-0 right-0">
      <svg width="90" height="14" viewBox="0 0 90 14" fill="none" stroke="#a8a8a8" strokeWidth="2" aria-hidden="true">
        <path d="M12 10h8M36 4h10v8H36zM39 7h5M67 2l9 10M76 2l-9 10" />
        <path d="M5 0v13M28 0v13M54 0v13" stroke="#fff" />
      </svg>
    </div>
  );
}

function Watermark() {
  return (
    <div className="absolute top-[7px] right-1 flex items-center gap-1 text-[#e05a1e]">
      <svg width="32" height="30" viewBox="0 0 32 30" aria-hidden="true">
        <rect x="0.5" y="0.5" width="31" height="29" rx="3" fill="#e05a1e" />
        <circle cx="16" cy="15" r="11.5" fill="none" stroke="#fff" strokeWidth="2.5" />
        <path d="M9 9h14M10 15h12M16 10v12M11 21h10" stroke="#fff" strokeWidth="2.5" />
      </svg>
      <div className="w-[67px] whitespace-nowrap">
        <div className="flex items-center text-[19px] leading-5">
          <span className="text-[24px]">5e</span>
          <span className="font-bold">天资</span>
        </div>
        <div className="mt-px text-[15px] leading-3">5etz.com</div>
      </div>
    </div>
  );
}

function ToolIcon({ label, children }) {
  return (
    <button type="button" aria-label={label} className="flex w-7 items-center justify-center">
      <svg width="18" height="18" viewBox="0 0 18 18" aria-hidden="true">
        {children}
      </svg>
    </button>
  );
}

function Separator() {
  return <span className="mx-[3px] h-[18px] w-[2px] bg-[#909090]" />;
}

function Tile({ label, color, active }) {
  return (
    <button
      type="button"
      className={clsx(
        "flex h-[22px] w-7 items-center justify-center rounded",
        active && "border border-[#505050] bg-white",
      )}
    >
      <span
        className={clsx(
          "flex h-4 w-4 items-center justify-center rounded-sm leading-4 text-white whitespace-nowrap",
          label.length > 2 ? "text-[9px]" : label.length > 1 ? "text-[12px]" : "text-[13px]",
          color === "gold" && "bg-linear-to-b from-[#dcb84a] to-[#c88c00]",
          color === "green" && "bg-linear-to-b from-[#8cc47c] to-[#5a9a4a]",
          color === "red" && "bg-linear-to-b from-[#ff9650] to-[#e83c1e]",
        )}
      >
        {label}
      </span>
    </button>
  );
}

function Toolbar() {
  return (
    <div className="flex h-6 items-center border-b-2 border-[#c4bcb8] bg-[#ebebeb]">
      <ToolIcon label="后退">
        <path d="M1 9 9 2v4h8v6H9v4z" fill="#ffc81e" stroke="#c88c14" />
      </ToolIcon>
      <ToolIcon label="首页">
        <path d="M3 9h12v8H3z" fill="#e8e8e8" stroke="#909090" />
        <path d="M0 10 9 1l9 9-2 1-7-6-7 6z" fill="#d21e1e" />
        <path d="M3 1h3v4L3 7z" fill="#a01414" />
        <path d="M7 11h4v6H7z" fill="#a03c28" />
      </ToolIcon>
      <ToolIcon label="便笺">
        <path d="M3 1h13v12l-4 4H2V4z" fill="#e6b43c" />
        <path d="M3 1h13v3H2z" fill="#c88c1e" />
        <path d="M5 7h8M5 10h8M5 13h5" stroke="#c8961e" />
        <path d="M12 17v-4h4z" fill="#fff0b4" />
      </ToolIcon>
      <ToolIcon label="F10">
        <rect x="1" y="3" width="16" height="14" rx="2" fill="#f07828" />
        <path d="M2 4 14 1l3 4H2z" fill="#ffb450" />
        <text x="9" y="14" textAnchor="middle" fill="#fff" className="text-[8px] font-bold">
          F10
        </text>
      </ToolIcon>
      <ToolIcon label="刷新">
        <path d="M3 8c0-4 8-6 11-2l2-2v6h-6l2-2c-2-2-5-2-6 0z" fill="#5aaa32" />
        <path d="M15 10c0 4-8 6-11 2l-2 2V9h6l-2 2c2 2 5 2 6-1z" fill="#3c8c1e" />
      </ToolIcon>
      <ToolIcon label="放大">
        <path d="m2 16 6-6" stroke="#f0b41e" strokeWidth="4" />
        <circle cx="12" cy="6" r="4.5" fill="#fff" stroke="#e63c3c" strokeWidth="2" />
        <path d="M9 6h6M12 3v6" stroke="#e60000" strokeWidth="2" />
      </ToolIcon>
      <ToolIcon label="缩小">
        <path d="m2 16 6-6" stroke="#f0b41e" strokeWidth="4" />
        <circle cx="12" cy="6" r="4.5" fill="#fff" stroke="#e63c3c" strokeWidth="2" />
        <path d="M9 6h6" stroke="#e60000" strokeWidth="2" />
      </ToolIcon>
      <ToolIcon label="叠加">
        <rect x="1" y="2" width="12" height="10" fill="#c83232" />
        <rect x="7" y="6" width="10" height="10" rx="1" fill="#6eaa6e" stroke="#e8f0e8" />
      </ToolIcon>
      <ToolIcon label="画笔">
        <path d="m3 11 8-10 4 3-8 10z" fill="#e63c28" />
        <path d="m3 11 4 3-5 2z" fill="#f0c896" />
        <path d="M6 16h10" stroke="#e63c28" strokeWidth="2" />
      </ToolIcon>
      <ToolIcon label="预警">
        <path d="M6 2c6 0 6 6 10 9l-8 5-6-5c3-2 2-8 4-9z" fill="#e6aa32" stroke="#8c4614" />
        <ellipse cx="9" cy="13" rx="6" ry="2.5" fill="#8c3c14" />
        <circle cx="10" cy="13" r="2" fill="#ffd25a" />
      </ToolIcon>
      <ToolIcon label="筛选">
        <path d="M2 3h14l-5 6v8H7V9z" fill="#b4b4b4" stroke="#787878" />
        <path d="M4 4h10l-5 5z" fill="#e61e28" />
      </ToolIcon>
      <button type="button" className="relative w-7 text-[12px] leading-5 text-[#3c8ce6]">
        新
        <span className="absolute top-0 right-1 h-[6px] w-[6px] rounded-full bg-[#ff0000]" />
      </button>
      <Separator />
      <ToolIcon label="报价表">
        <rect x="1.5" y="1.5" width="15" height="15" fill="#fff" stroke="#404040" />
        <path d="M2 4h14" stroke="#e6b41e" strokeWidth="2" />
        <path d="M3 7.5h5M3 10.5h5M3 13.5h5" stroke="#202080" />
        <path d="M10 7.5h5M10 10.5h5M10 13.5h5" stroke="#148c14" />
      </ToolIcon>
      <ToolIcon label="走势图">
        <path d="M2 17v-4h3v4zM7 17v-6h3v6z" fill="#e66428" />
        <path d="M12 17V8h4v9z" fill="#e6b41e" />
        <path d="m1 11 5-5 3 3 7-8" fill="none" stroke="#e60000" strokeWidth="2" />
      </ToolIcon>
      <Tile label="Tick" color="red" />
      {PERIODS.map((p) => (
        <Tile key={p.label} {...p} />
      ))}
      <Separator />
      <Tile label="画" color="red" />
    </div>
  );
}

function SideTabs() {
  return (
    <nav className="flex w-5 flex-none flex-col border-r-2 border-[#c8c0bc] bg-linear-to-b from-[#e0e0e0] to-[#c8c8c8] pl-[2px]">
      {SIDE_TABS.map((tab, i) => (
        <button
          key={tab}
          type="button"
          className={clsx(
            "bg-[#707070] p-px pr-0 [clip-path:polygon(0_0,100%_0,100%_100%,0_86%)]",
            i === 0 ? "h-20" : "h-[82px]",
          )}
        >
          <span
            className={clsx(
              "flex h-full w-full items-center justify-center pb-2 text-[12px] leading-4 [writing-mode:vertical-rl] [clip-path:polygon(0_0,100%_0,100%_100%,0_86%)]",
              i === 0 ? "bg-[#787878] text-white" : "bg-[#f2f2ec] text-[#404040]",
            )}
          >
            {tab}
            {i === 0 && (
              <svg width="6" height="8" viewBox="0 0 6 8" className="mt-1" aria-hidden="true">
                <path d="M1 0v8l5-4z" fill="#fff" />
              </svg>
            )}
          </span>
        </button>
      ))}
    </nav>
  );
}

function ChartTitle() {
  return (
    <div className="flex h-[19px] items-center border-b border-[#c01414] text-[12px] leading-4">
      <h2 className="flex-1 pl-px text-[#e8e8e8]">螺纹2005(010605)&lt;日线&gt;</h2>
      <a href="#overlay" className="mr-5 text-[#78b4ff] underline">
        商品叠加
      </a>
      <a href="#period" className="mr-[21px] text-[#78b4ff] underline">
        周期
      </a>
      <div className="mr-px flex gap-px">
        <BoxIcon label="上一个" d="M3 7l4-4v2h6v4H7v2z" />
        <BoxIcon label="下一个" d="M13 7 9 3v2H3v4h6v2z" />
        <BoxIcon label="布局" d="M1 9.5h9M10.5 1v12M12 3.5h2M12 5.5h2M12 7.5h2M12 9.5h2M12 11.5h2" />
      </div>
    </div>
  );
}

function BoxIcon({ label, d }) {
  return (
    <button type="button" aria-label={label}>
      <svg width="16" height="14" viewBox="0 0 16 14" fill="none" stroke="#78b4ff" aria-hidden="true">
        <path d={`M.5.5h15v13H.5z${d}`} shapeRendering="crispEdges" />
      </svg>
    </button>
  );
}

/* ---------- quote panel ---------- */

function DepthRow({ row: [label, price, size], best }) {
  return (
    <div className={clsx("flex items-center", best ? "h-7" : "h-5")}>
      <span className="w-9 text-[14px] leading-5 text-[#e8e8e8]">{label}</span>
      <span className={clsx("w-[71px] text-right font-bold", RED, best ? "text-[21px] leading-7" : "text-[14px] leading-5")}>
        {price}
      </span>
      <span className={clsx("pl-4 font-bold", YELLOW, best ? "text-[21px] leading-7" : "text-[14px] leading-5")}>
        {size}
      </span>
    </div>
  );
}

function QuotePanel() {
  return (
    <aside className="flex w-[241px] flex-none flex-col border-l border-[#c01414]">
      <div className="flex h-6 items-center">
        <h2 className="flex-1 pl-1 text-center font-['Liberation_Serif','Noto_Sans_CJK_SC',serif] text-[21px] leading-6 font-medium text-[#ffff00]">
          螺纹2005(rb2005)
        </h2>
        <button type="button" aria-label="最大化" className="mr-[2px] mb-2">
          <svg width="16" height="14" viewBox="0 0 16 14" fill="none" stroke="#78b4ff" shapeRendering="crispEdges" aria-hidden="true">
            <path d="M.5.5h15v13H.5zM3.5 3.5h9v7h-9zM3 4.5h10" />
          </svg>
        </button>
      </div>
      <div className="flex h-[6px] border-y border-[#c01414] px-px">
        <div className="w-[48%] bg-[#ff3c3c]" />
        <div className="flex-1 bg-[#00e600]" />
      </div>
      <div className="border-b border-[#c01414] pb-[2px] pl-[5px]">
        {ASKS.map((row) => (
          <DepthRow key={row[0]} row={row} />
        ))}
        <DepthRow row={["卖一", 3312, 103]} best />
      </div>
      <div className="border-b border-[#c01414] pt-px pb-px pl-[5px]">
        <DepthRow row={["买一", 3311, 278]} best />
        {BIDS.map((row) => (
          <DepthRow key={row[0]} row={row} />
        ))}
      </div>
      <dl className="border-b border-[#c01414] pr-[6px] pl-[5px] text-[14px] leading-5">
        {STATS.map(([l1, v1, c1, l2, v2, c2]) => (
          <div key={l1} className="flex">
            <dt className="w-9 text-[#e8e8e8]">{l1}</dt>
            <dd className={clsx("w-[71px] text-right font-bold", c1)}>{v1}</dd>
            <dt className="w-12 pl-[15px] whitespace-nowrap text-[#e8e8e8]">{l2}</dt>
            <dd className={clsx("flex-1 text-right font-bold", c2)}>{v2}</dd>
          </div>
        ))}
      </dl>
      <table className="w-full table-fixed text-right text-[14px] leading-[22px] whitespace-nowrap">
        <colgroup>
          <col className="w-[46px]" />
          <col className="w-[58px]" />
          <col className="w-12" />
          <col className="w-12" />
          <col />
        </colgroup>
        <thead>
          <tr className="text-[#808080]">
            <th className="pl-[5px] text-left font-normal">北京</th>
            <th className="font-normal">价格</th>
            <th className="font-normal">√大单</th>
            <th className="font-normal">仓差</th>
            <th className="pr-1 font-normal">性质</th>
          </tr>
        </thead>
        <tbody>
          {TICKS.map(([time, price, tone, size, change, kind, side], i) => (
            <tr key={i} className="font-bold">
              {time.length > 3 ? (
                <td className={clsx("pl-[5px] text-left", WHITE)}>{time}</td>
              ) : (
                <td className={clsx("pr-2 text-[12px] font-normal", WHITE)}>{time}</td>
              )}
              <td className={tone}>{price}</td>
              <td className={side}>{size}</td>
              <td className={YELLOW}>{change}</td>
              <td className={clsx("pr-1 font-normal", side)}>{kind}</td>
            </tr>
          ))}
        </tbody>
      </table>
      <div className="mt-auto flex h-4">
        <button
          type="button"
          className="w-[38px] rounded-b-sm border-r border-b border-[#c01414] text-[13px] leading-4 text-[#e8e8e8]"
        >
          笔
        </button>
        <div className="flex-1 border-t border-[#c01414]" />
      </div>
    </aside>
  );
}

export default function App() {
  return (
    <div className="relative min-h-screen bg-[#c8c0bc] font-['Liberation_Sans','Noto_Sans_CJK_SC',sans-serif]">
      <MenuBar />
      <WindowControls />
      <Toolbar />
      <Watermark />
      <div className="flex pr-px pb-[2px]">
        <SideTabs />
        <div className="flex min-w-0 flex-1 bg-black">
          <main className="min-w-0 flex-1">
            <ChartTitle />
            <PricePanel />
            <VolumePanel />
            <MacdPanel />
            <ShortPanel />
            <CciPanel />
            <TimeAxis />
          </main>
          <QuotePanel />
        </div>
      </div>
    </div>
  );
}
